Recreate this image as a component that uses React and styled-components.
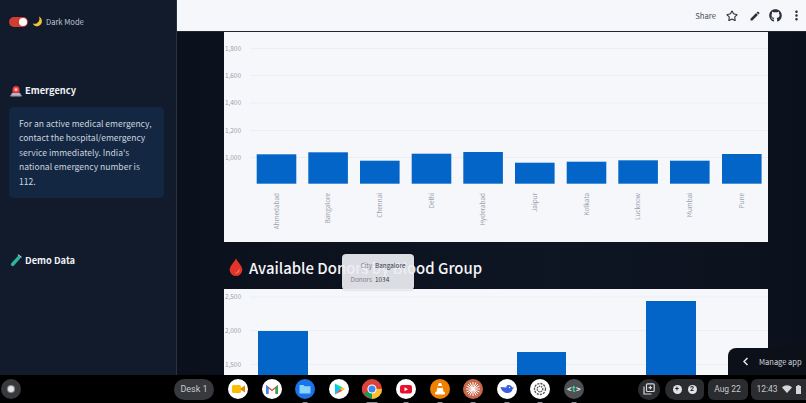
import React from "react";
import styled, { createGlobalStyle } from "styled-components";
import { MdEdit, MdMoreVert } from "react-icons/md";
import { FaGithub } from "react-icons/fa";
import { LuStar } from "react-icons/lu";

const Global = createGlobalStyle`
  html, body { margin: 0; padding: 0; background: #000; }
  #root { width: 806px; height: 403px; overflow: hidden; }
  * { box-sizing: border-box; }
`;
const SANS = `"Noto Sans CJK SC", "Noto Sans", sans-serif`;

const Screen = styled.div`display:flex;flex-direction:column;width:806px;height:403px;position:relative;font-family:${SANS};overflow:hidden;`;
const Desktop = styled.div`display:flex;height:375px;`;
const Sidebar = styled.aside`width:177px;flex:none;background:#121b2c;border-right:1px solid #293244;padding:17px 12px 0 9px;display:flex;flex-direction:column;`;
const ToggleRow = styled.div`display:flex;align-items:center;height:9px;gap:3px;color:#bcc3cf;font-size:7.55px;`;
const Toggle = styled.div`width:19px;height:10px;border-radius:5px;background:#cf3d33;display:flex;justify-content:flex-end;align-items:center;padding-right:1px;margin-right:1px;`;
const Knob = styled.div`width:8px;height:8px;border-radius:50%;background:#fff;`;
const SideHeading = styled.h3`margin:${p => p.$top}px 0 0;display:flex;align-items:center;gap:3px;height:16px;color:#f0f2f6;font-size:9.3px;font-weight:600;padding-left:1px;`;
const InfoBox = styled.div`margin-top:9px;background:#132742;border-radius:5px;padding:9px 10px 10px;height:91px;color:#ccd4df;font-size:8.55px;line-height:14.4px;`;
const Main = styled.main`flex:1;min-width:0;display:flex;flex-direction:column;background:linear-gradient(90deg,#0b111c,#0e1523 60%,#0b111c);position:relative;`;
const Header = styled.header`height:32px;flex:none;background:#f6f7fb;border-bottom:1px solid #20242e;display:flex;align-items:center;justify-content:flex-end;color:#30343f;`;
const ShareLabel = styled.span`font-size:7.7px;color:#4a4f5c;margin-right:4.4px;`;
const HeaderIcon = styled.span`width:${p => p.$w}px;height:20px;display:flex;align-items:center;justify-content:center;color:#2b2f3a;`;
const Content = styled.div`flex:1;min-height:0;padding-left:47px;width:591px;display:flex;flex-direction:column;overflow:hidden;`;
const ChartCard = styled.div`width:544px;flex:none;height:${p => p.$h}px;background:#f6f7fb;overflow:hidden;`;
const ChartSvg = styled.svg`display:block;`;
const Heading = styled.h2`margin:0;height:47px;flex:none;display:flex;align-items:center;gap:6px;padding:3px 0 0 5px;color:#f5f6f8;font-size:14.9px;font-weight:500;`;
const Tooltip = styled.div`position:absolute;left:165px;top:254px;width:72px;height:36px;border-radius:4px;background:rgba(236,237,242,.93);box-shadow:0 0 2px rgba(0,0,0,.25);display:grid;grid-template-columns:30px auto;column-gap:3px;row-gap:3px;align-content:center;font-size:6.4px;line-height:11px;`;
const TipKey = styled.span`color:#7d828e;text-align:right;`;
const TipVal = styled.span`color:#343845;`;
const ManageApp = styled.div`position:absolute;right:0;bottom:0;width:78px;height:27px;background:#0c1119;border-top-left-radius:8px;display:flex;align-items:center;padding-left:14px;gap:10px;color:#d5d8de;font-size:7.5px;white-space:nowrap;`;

const Taskbar = styled.footer`height:28px;background:#000;display:flex;align-items:center;position:relative;font-family:Roboto,sans-serif;color:#c6c8cc;font-size:8.5px;`;
const Launcher = styled.div`width:20px;height:20px;margin-left:1px;border-radius:50%;background:#37393c;display:flex;align-items:center;justify-content:center;`;
const LauncherDot = styled.div`width:6px;height:6px;border-radius:50%;background:#e4e5e7;box-shadow:0 0 0 1px #8b8d90;`;
const DeskPill = styled.div`width:40px;height:21px;margin-left:153px;border-radius:11px;background:#37393c;display:flex;align-items:center;justify-content:center;font-size:9px;`;
const Apps = styled.div`display:flex;gap:13.6px;margin-left:14px;`;
const AppSlot = styled.div`width:20px;height:20px;position:relative;`;
const Running = styled.div`position:absolute;left:50%;transform:translateX(-50%);bottom:-4px;width:${p => p.$w || 5}px;height:1px;background:#8a8c90;`;
const Tray = styled.div`margin-left:auto;display:flex;align-items:center;gap:3.5px;`;
const RoundBtn = styled.div`width:22px;height:21px;border-radius:50%;background:#2a2c2f;display:flex;align-items:center;justify-content:center;margin-right:1.5px;`;
const Pill = styled.div`height:21px;width:${p => p.$w}px;background:#2a2c2f;border-radius:${p => p.$r || "6px"};display:flex;align-items:center;justify-content:center;gap:${p => p.$gap || 0}px;`;
const Badge = styled.span`width:9px;height:9px;border-radius:50%;background:#e2e3e5;color:#222;font-size:7px;font-weight:700;display:flex;align-items:center;justify-content:center;`;

const cities = [
  ["Ahmedabad", 32.7, 122.3], ["Bangalore", 84.3, 120.3], ["Chennai", 136, 128.7], ["Delhi", 187.7, 121.7],
  ["Hyderabad", 239.3, 120], ["Jaipur", 291, 130.7], ["Kolkata", 342.7, 129.7], ["Lucknow", 394.3, 128.3],
  ["Mumbai", 446, 128.7], ["Pune", 498, 122],
];
const grid1 = [["1,800", 16.5], ["1,600", 43.5], ["1,400", 71], ["1,200", 98.5], ["1,000", 125.5]];
const grid2 = [["2,500", 8], ["2,000", 41.5], ["1,500", 75.5]];
const bars2 = [[34, 50, 42], [293, 49, 63], [422, 50, 12]];
const AXIS = { fontFamily: SANS, fontSize: 6.4, fill: "#9a9fab" };

function Grid({ rows }) {
  return rows.map(([l, y]) => (
    <g key={l}>
      <line x1="26" x2="544" y1={y} y2={y} stroke="#eceef3" strokeWidth="1" />
      <text x="1" y={y + 2.4} style={AXIS}>{l}</text>
    </g>
  ));
}
const CityChart = () => (
  <ChartSvg width="544" height="210" viewBox="0 0 544 210">
    <Grid rows={grid1} />
    {cities.map(([n, x, y]) => (
      <g key={n}>
        <rect x={x} y={y} width="39.6" height={151.7 - y} fill="#0265c7" />
        <text transform={`translate(${x + 22} 161) rotate(-90)`} textAnchor="end" style={AXIS}>{n}</text>
      </g>
    ))}
  </ChartSvg>
);
const GroupChart = () => (
  <ChartSvg width="544" height="86" viewBox="0 0 544 86">
    <Grid rows={grid2} />
    {bars2.map(([x, w, y]) => <rect key={x} x={x} y={y} width={w} height={86 - y} fill="#0265c7" />)}
  </ChartSvg>
);

const Moon = () => (
  <svg width="11" height="11" viewBox="0 0 11 11"><path d="M7 .6C8 3 7.4 6 4.6 7.4 3.200 8 1.800 8 .7 7.500 1.800 9.800 4 10.700 6 10.200 8.800 9.500 10.200 7.200 9.900 4.800 9.700 3 8.600 1.400 7 .6Z" fill="#f4c430" /></svg>
);
const Siren = () => (
  <svg width="12" height="13" viewBox="0 0 12 13"><path d="M2.500 9.500V5.500a3.500 3.500 0 0 1 7 0v4Z" fill="#ee3b3b" /><circle cx="6" cy="5.500" r="1.600" fill="#ffc9bd" /><rect x="1.500" y="9.300" width="9" height="1.600" fill="#d8dde6" /><rect x=".4" y="10.800" width="11.200" height="1.800" rx=".5" fill="#9aa6b8" /></svg>
);
const Tube = () => (
  <svg width="12" height="13" viewBox="0 0 12 13"><path d="M8.500 1.500 11 3.500 4 11.500a1.700 1.700 0 0 1-2.700-2.200Z" fill="#2cb5a0" /><path d="M8 .6 11.500 3.400" stroke="#9ddad0" strokeWidth="1.200" /></svg>
);
const Drop = () => (
  <svg width="14" height="18" viewBox="0 0 14 18"><path d="M7 .5C5 4.500.7 8 .7 11.700a6.300 6.300 0 0 0 12.600 0C13.300 8 9 4.500 7 .5Z" fill="#e2342b" /><path d="M10.500 10.500c.6 3-1.500 5-4.500 5 3-1.500 3-3 4.500-5Z" fill="#f47f6b" /></svg>
);

const Disc = ({ bg = "#fff", children }) => (
  <svg width="20" height="20" viewBox="0 0 20 20"><circle cx="10" cy="10" r="10" fill={bg} />{children}</svg>
);
const apps = [
  [<Disc key="m"><rect x="4" y="6" width="9" height="8" rx="1.500" fill="#fbbc04" /><path d="M13 9l4-2.500v7L13 11Z" fill="#ea8600" /></Disc>, 0],
  [<Disc key="g"><path d="M4 15V6l6 4.500L16 6v9h-2.500V9.500L10 12 6.500 9.500V15Z" fill="#ea4335" /><path d="M4 15V6l2.500 2v7Z" fill="#4285f4" /><path d="M16 15V6l-2.500 2v7Z" fill="#34a853" /></Disc>, 0],
  [<Disc key="f" bg="#1a73e8"><path d="M4.500 6h4l1.200 1.300h5.800v7.200h-11Z" fill="#8ad4fb" /></Disc>, 5],
  [<Disc key="p"><path d="M6 4.500v11L11.500 10Z" fill="#00c3ff" /><path d="M6 4.500 11.500 10l1.800-1.800Z" fill="#00e676" /><path d="M6 15.500 11.500 10l1.800 1.800Z" fill="#f44336" /><path d="M13.300 8.200 16 10l-2.700 1.800L11.500 10Z" fill="#ffc107" /></Disc>, 0],
  [<Disc key="c" bg="#db4437"><path d="M10 10 1.300 15A10 10 0 0 1 1.300 5Z" fill="#db4437" /><path d="M10 10H20A10 10 0 0 1 10 20L1.300 15Z" fill="#0f9d58" /><path d="M10 10 10 20A10 10 0 0 0 20 10Z" fill="#fbc02d" /><circle cx="10" cy="10" r="4.600" fill="#fff" /><circle cx="10" cy="10" r="3.500" fill="#4285f4" /></Disc>, 11],
  [<Disc key="y"><rect x="4" y="6" width="12" height="8.500" rx="2.200" fill="#e8112d" /><path d="M8.500 8.200v4l3.500-2Z" fill="#fff" /></Disc>, 5],
  [<Disc key="v" bg="#f08000"><path d="M8.800 4h2.400l2.500 9H6.300Z" fill="#fff" /><path d="M8 7h4l.5 2h-5Z" fill="#f08000" /><rect x="5" y="13" width="10" height="2.500" rx="1" fill="#fff" /></Disc>, 5],
  [<Disc key="s" bg="#c8664a"><path d="M10 3v14M3 10h14M5 5l10 10M15 5 5 15M7 3.500l6 13M13 3.500l-6 13M3.500 7l13 6M3.500 13l13-6" stroke="#fff" strokeWidth="1" /></Disc>, 5],
  [<Disc key="d"><path d="M3.500 8c1 4 4 6 7.500 6 2 0 4-1.500 4.500-3.500.3-1 1.200-1.500 1.500-2.500-.7.500-1.300.5-2 .2-.8-2-3-2.500-4.500-2-1 .4-1.500 1.300-1 2.300-1.500 0-3-.3-6-.5Z" fill="#3b5fe0" /><circle cx="12.500" cy="8.500" r=".7" fill="#fff" /></Disc>, 5],
  [<Disc key="o"><g fill="none" stroke="#555" strokeWidth="1.300"><circle cx="10" cy="10" r="5.500" strokeDasharray="2.200 1" /><circle cx="10" cy="10" r="2.800" strokeDasharray="1.500 .8" /></g></Disc>, 5],
  [<Disc key="t" bg="#4d5154"><text x="10" y="13" textAnchor="middle" fontFamily="Roboto,sans-serif" fontSize="9.500" fontWeight="700" letterSpacing=".4"><tspan fill="#dfe1e3">&lt;</tspan><tspan fill="#3fd5a3">t</tspan><tspan fill="#dfe1e3">&gt;</tspan></text></Disc>, 5],
];

export default function App() {
  return (
    <Screen>
      <Global />
      <Desktop>
        <Sidebar>
          <ToggleRow>
            <Toggle><Knob /></Toggle>
            <Moon />
            <span>Dark Mode</span>
          </ToggleRow>
          <SideHeading $top={56}><Siren />Emergency</SideHeading>
          <InfoBox>For an active medical emergency, contact the hospital/emergency service immediately. India's national emergency number is 112.</InfoBox>
          <SideHeading $top={54}><Tube />Demo Data</SideHeading>
        </Sidebar>
        <Main>
          <Header>
            <ShareLabel>Share</ShareLabel>
            <HeaderIcon $w={24}><LuStar size={12} strokeWidth={2.2} /></HeaderIcon>
            <HeaderIcon $w={21}><MdEdit size={12} /></HeaderIcon>
            <HeaderIcon $w={20.6}><FaGithub size={13} /></HeaderIcon>
            <HeaderIcon $w={20}><MdMoreVert size={15} /></HeaderIcon>
          </Header>
          <Content>
            <ChartCard $h={210}><CityChart /></ChartCard>
            <Heading><Drop />Available Donors by Blood Group</Heading>
            <ChartCard $h={86}><GroupChart /></ChartCard>
          </Content>
          <Tooltip>
            <TipKey>City</TipKey><TipVal>Bangalore</TipVal>
            <TipKey>Donors</TipKey><TipVal>1034</TipVal>
          </Tooltip>
          <ManageApp>
            <svg width="7" height="9" viewBox="0 0 7 9"><path d="M5.500 1 2 4.500 5.500 8" fill="none" stroke="#e6e8ec" strokeWidth="1.500" /></svg>
            <span>Manage app</span>
          </ManageApp>
        </Main>
      </Desktop>
      <Taskbar>
        <Launcher><LauncherDot /></Launcher>
        <DeskPill>Desk 1</DeskPill>
        <Apps>
          {apps.map(([icon, w], i) => (
            <AppSlot key={i}>{icon}{w ? <Running $w={w} /> : null}</AppSlot>
          ))}
        </Apps>
        <Tray>
          <RoundBtn>
            <svg width="12" height="12" viewBox="0 0 12 12"><rect x="3.500" y=".8" width="7.700" height="7.700" rx="1" fill="none" stroke="#d5d6d9" strokeWidth="1.200" /><path d="M1 3.500V11h7.500" fill="none" stroke="#d5d6d9" strokeWidth="1.200" /><path d="M7.300 2.800v3.600M5.500 4.600h3.600" stroke="#d5d6d9" strokeWidth="1.200" /></svg>
          </RoundBtn>
          <Pill $w={39} $r="11px 6px 6px 11px" $gap={6}>
            <Badge>+</Badge><Badge>2</Badge>
          </Pill>
          <Pill $w={40}>Aug 22</Pill>
          <Pill $w={55} $r="6px 0 0 6px" $gap={4}>
            <span>12:43</span>
            <svg width="10" height="8" viewBox="0 0 10 8"><path d="M0 2.500C3-.5 7-.5 10 2.500L5 8Z" fill="#d5d6d9" /></svg>
            <svg width="5" height="9" viewBox="0 0 5 9"><path d="M1.500 0h2v1H5v8H0V1h1.500Z" fill="#d5d6d9" /></svg>
          </Pill>
        </Tray>
      </Taskbar>
    </Screen>
  );
}
